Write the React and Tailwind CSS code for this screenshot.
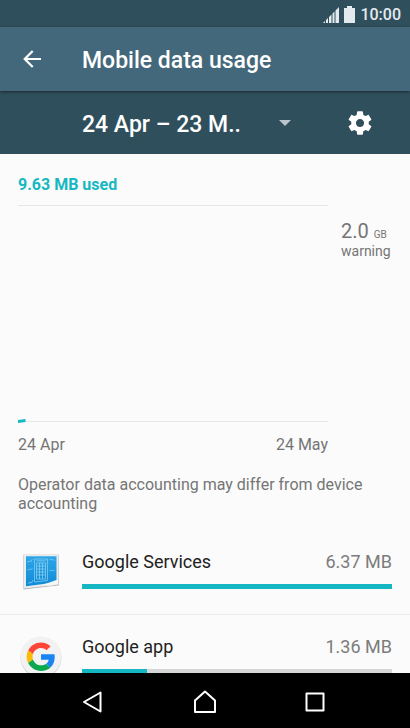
const apps = [
  { name: "Google Services", usage: "6.37 MB", percent: 100, Icon: ServicesIcon },
  { name: "Google app", usage: "1.36 MB", percent: 21, Icon: GoogleIcon },
];

function ServicesIcon() {
  return (
    <svg viewBox="0 0 42 42" className="size-[42px]" aria-hidden="true">
      <defs>
        <linearGradient id="sheet" x1="0" y1="0" x2="0" y2="1">
          <stop offset="0" stopColor="#2fa6e6" />
          <stop offset="1" stopColor="#0f8ad6" />
        </linearGradient>
      </defs>
      <path d="M3.500 3.500h35l.300 31-8 .800L3.500 38.500z" fill="#b0b4b6" />
      <path d="M4 3.300h34l.300 30.200-7 1L4 37.500z" fill="#e9ebec" />
      <path d="M6 5.300h30.500v26L6 35.300z" fill="url(#sheet)" />
      <path d="M22 34l16-5.500v4.500l-7 1.500z" fill="#f6f7f7" />
      <g fill="none" stroke="#8fd3f5" strokeWidth="0.700">
        <path d="M14.500 8h13v21.500l-13 1.500z" />
        <path d="M16.500 12h9v16h-9z" />
        <path d="M16.500 15h9M16.500 18h9M16.500 21h9M16.500 24h9M19.500 12v16M22.500 12v16M16.500 9.800h9" />
        <path d="M7.500 11l2-1 1 1 2-3M7.500 19l2-1 1 1 2-2M29.500 8l2 1 1-1 2 2M29.500 19l2 1 1-1 2 1M8.500 33l1-2 2 1 1.500-3" />
      </g>
    </svg>
  );
}

function GoogleIcon() {
  return (
    <svg viewBox="0 0 42 42" className="size-[42px]" aria-hidden="true">
      <circle cx="21" cy="21.500" r="20.500" fill="#d2d2d2" />
      <circle cx="21" cy="20.800" r="20.200" fill="#f2f2f2" />
      <g transform="translate(6.700 6.400) scale(.596)">
        <path fill="#fbbc05" d="M10.530 28.590c-.480-1.450-.760-2.990-.760-4.590s.270-3.140.760-4.590l-7.980-6.190C.920 16.460 0 20.120 0 24s.920 7.540 2.560 10.780z" />
        <path fill="#ff4537" d="M24 9.500c3.540 0 6.710 1.220 9.210 3.600l6.850-6.850C35.900 2.380 30.470 0 24 0 14.620 0 6.510 5.380 2.560 13.220l7.980 6.190C12.430 13.720 17.740 9.500 24 9.500z" />
        <path fill="#0ba94f" d="M24 48c6.480 0 11.930-2.130 15.890-5.810l-7.730-6c-2.150 1.450-4.920 2.300-8.160 2.300-6.260 0-11.570-4.220-13.470-9.910l-7.980 6.190C6.510 42.620 14.620 48 24 48z" />
        <path fill="#1a84f5" d="M46.980 24.550c0-1.570-.150-3.090-.380-4.550H24v9.020h12.940c-.580 2.960-2.260 5.480-4.780 7.180l7.730 6c4.510-4.180 7.090-10.360 7.090-17.650z" />
      </g>
    </svg>
  );
}

function StatusBar() {
  return (
    <div className="flex h-[27px] shrink-0 items-center justify-end gap-[5px] bg-[#304f5d] pt-[2px] pr-[9px] text-[#e3eaed]">
      <svg viewBox="0 0 16 16" className="size-4" fill="currentColor" aria-hidden="true">
        <path d="M0 16l2-2v2zM3 13l2-2v5H3zM6 10l2.500-2.500V16H6zM9.500 6.500l2-2V16h-2zM12.500 3.500L16 0v16h-3.500z" />
      </svg>
      <svg viewBox="0 0 11 17" className="h-[17px] w-[11px]" fill="currentColor" aria-hidden="true">
        <path d="M3 0h5v2h3v15H0V2h3z" />
      </svg>
      <span className="text-base leading-5 font-medium">10:00</span>
    </div>
  );
}

function AppRow({ name, usage, percent, Icon }) {
  return (
    <li className="flex h-[85px] items-center border-b border-[#ececec] pr-[18px] pl-5">
      <Icon />
      <div className="ml-5 flex-1 pb-[6px]">
        <div className="flex justify-between text-lg leading-6">
          <span className="text-[#212121]">{name}</span>
          <span className="text-[#7c7c7c]">{usage}</span>
        </div>
        <div className="mt-[10px] h-[5px] bg-[#d6d6d6]">
          <div className="h-full bg-[#15b8c2]" style={{ width: `${percent}%` }} />
        </div>
      </div>
    </li>
  );
}

export default function App() {
  return (
    <div className="flex h-screen flex-col overflow-hidden bg-[#fbfbfb] font-['Roboto',sans-serif] text-[#757575]">
      <StatusBar />

      <header className="relative z-10 flex h-16 shrink-0 items-center bg-[#44687b] pl-5 text-white shadow-[0_1px_3px_rgba(0,0,0,0.5)]">
        <button aria-label="Back" className="flex size-6 items-center justify-center">
          <svg viewBox="0 0 18 18" className="size-[18px]" fill="none" stroke="currentColor" strokeWidth="2.200" aria-hidden="true">
            <path d="M18 9H2M9.700 1L1.700 9l8 8" />
          </svg>
        </button>
        <h1 className="ml-[38px] pt-1 text-[23px] leading-7 font-medium">Mobile data usage</h1>
      </header>

      <div className="flex h-[63px] shrink-0 items-center bg-[#304f5d] pr-9 pl-[82px] text-white">
        <div className="relative flex flex-1 items-center">
          <select
            aria-label="Usage period"
            className="w-full appearance-none bg-transparent pt-1 text-[23px] leading-7 font-medium"
          >
            <option>24 Apr – 23 M..</option>
          </select>
          <svg viewBox="0 0 12 6" className="pointer-events-none absolute right-[55px] h-[6px] w-3" fill="#b9c5cb" aria-hidden="true">
            <path d="M0 0h12L6 6z" />
          </svg>
        </div>
        <button aria-label="Settings" className="flex size-7 items-center justify-center">
          <svg viewBox="0 0 24 24" className="size-7" fill="currentColor" aria-hidden="true">
            <path d="M19.430 12.980c.040-.320.070-.640.070-.980s-.030-.660-.070-.980l2.110-1.650c.190-.150.240-.420.120-.640l-2-3.460c-.120-.220-.390-.300-.610-.220l-2.490 1c-.520-.400-1.080-.730-1.690-.980l-.380-2.650C14.460 2.180 14.250 2 14 2h-4c-.250 0-.460.180-.490.420l-.380 2.650c-.610.250-1.170.590-1.690.980l-2.490-1c-.230-.090-.490 0-.610.220l-2 3.460c-.130.220-.070.490.120.640l2.110 1.650c-.040.320-.070.650-.070.980s.030.660.070.980l-2.110 1.650c-.190.150-.240.420-.120.640l2 3.460c.120.220.390.300.610.220l2.490-1c.520.400 1.080.730 1.690.980l.380 2.650c.030.240.240.420.490.420h4c.250 0 .460-.180.490-.420l.380-2.650c.610-.250 1.170-.590 1.690-.980l2.490 1c.230.090.490 0 .610-.220l2-3.460c.120-.220.070-.490-.120-.640zM12 15.500c-1.930 0-3.500-1.570-3.500-3.500s1.570-3.500 3.500-3.500 3.500 1.570 3.500 3.500-1.570 3.500-3.500 3.500z" />
          </svg>
        </button>
      </div>

      <main className="min-h-0 flex-1 overflow-hidden">
        <p className="px-[18px] pt-[21px] text-base leading-5 font-bold text-[#15b8c2]">9.63 MB used</p>

        <div className="mt-[10px] flex gap-[13px] px-[18px]">
          <div className="flex-1">
            <div className="flex h-[217px] items-end border-y border-[#e6e6e6]">
              <svg viewBox="0 0 8 4" className="-mb-[2px] h-1 w-2" aria-hidden="true">
                <path d="M0 1l7.500-1v3L0 4z" fill="#15b8c2" />
              </svg>
            </div>
            <div className="mt-[13px] flex justify-between text-base leading-5">
              <span>24 Apr</span>
              <span>24 May</span>
            </div>
          </div>
          <div className="w-[51px] pt-[18px]">
            <p className="text-xl leading-4">
              2.0 <span className="text-[10px]">GB</span>
            </p>
            <p className="text-sm leading-4">warning</p>
          </div>
        </div>

        <p className="px-[18px] pt-5 text-base leading-[19px]">
          Operator data accounting may differ from device accounting
        </p>

        <ul className="mt-[17px]">
          {apps.map((app) => (
            <AppRow key={app.name} {...app} />
          ))}
        </ul>
      </main>

      <nav className="flex h-[55px] shrink-0 items-center justify-center gap-[86px] bg-black text-white">
        <button aria-label="Back" className="flex size-6 items-center justify-center">
          <svg viewBox="0 0 24 24" className="size-6" fill="none" stroke="currentColor" strokeWidth="2" strokeLinejoin="round" aria-hidden="true">
            <path d="M17 3.500v19L.500 13z" className="stroke-2" transform="translate(.500 0)" />
          </svg>
        </button>
        <button aria-label="Home" className="flex size-6 items-center justify-center">
          <svg viewBox="0 0 24 24" className="size-6" fill="none" stroke="currentColor" strokeWidth="2" strokeLinejoin="round" aria-hidden="true">
            <path d="M12 2.500L22 11.500V23H2V11.500z" />
          </svg>
        </button>
        <button aria-label="Recent apps" className="flex size-6 items-center justify-center">
          <svg viewBox="0 0 24 24" className="size-6" fill="none" stroke="currentColor" strokeWidth="2" strokeLinejoin="round" aria-hidden="true">
            <path d="M3.500 4.500h17v17h-17z" />
          </svg>
        </button>
      </nav>
    </div>
  );
}
